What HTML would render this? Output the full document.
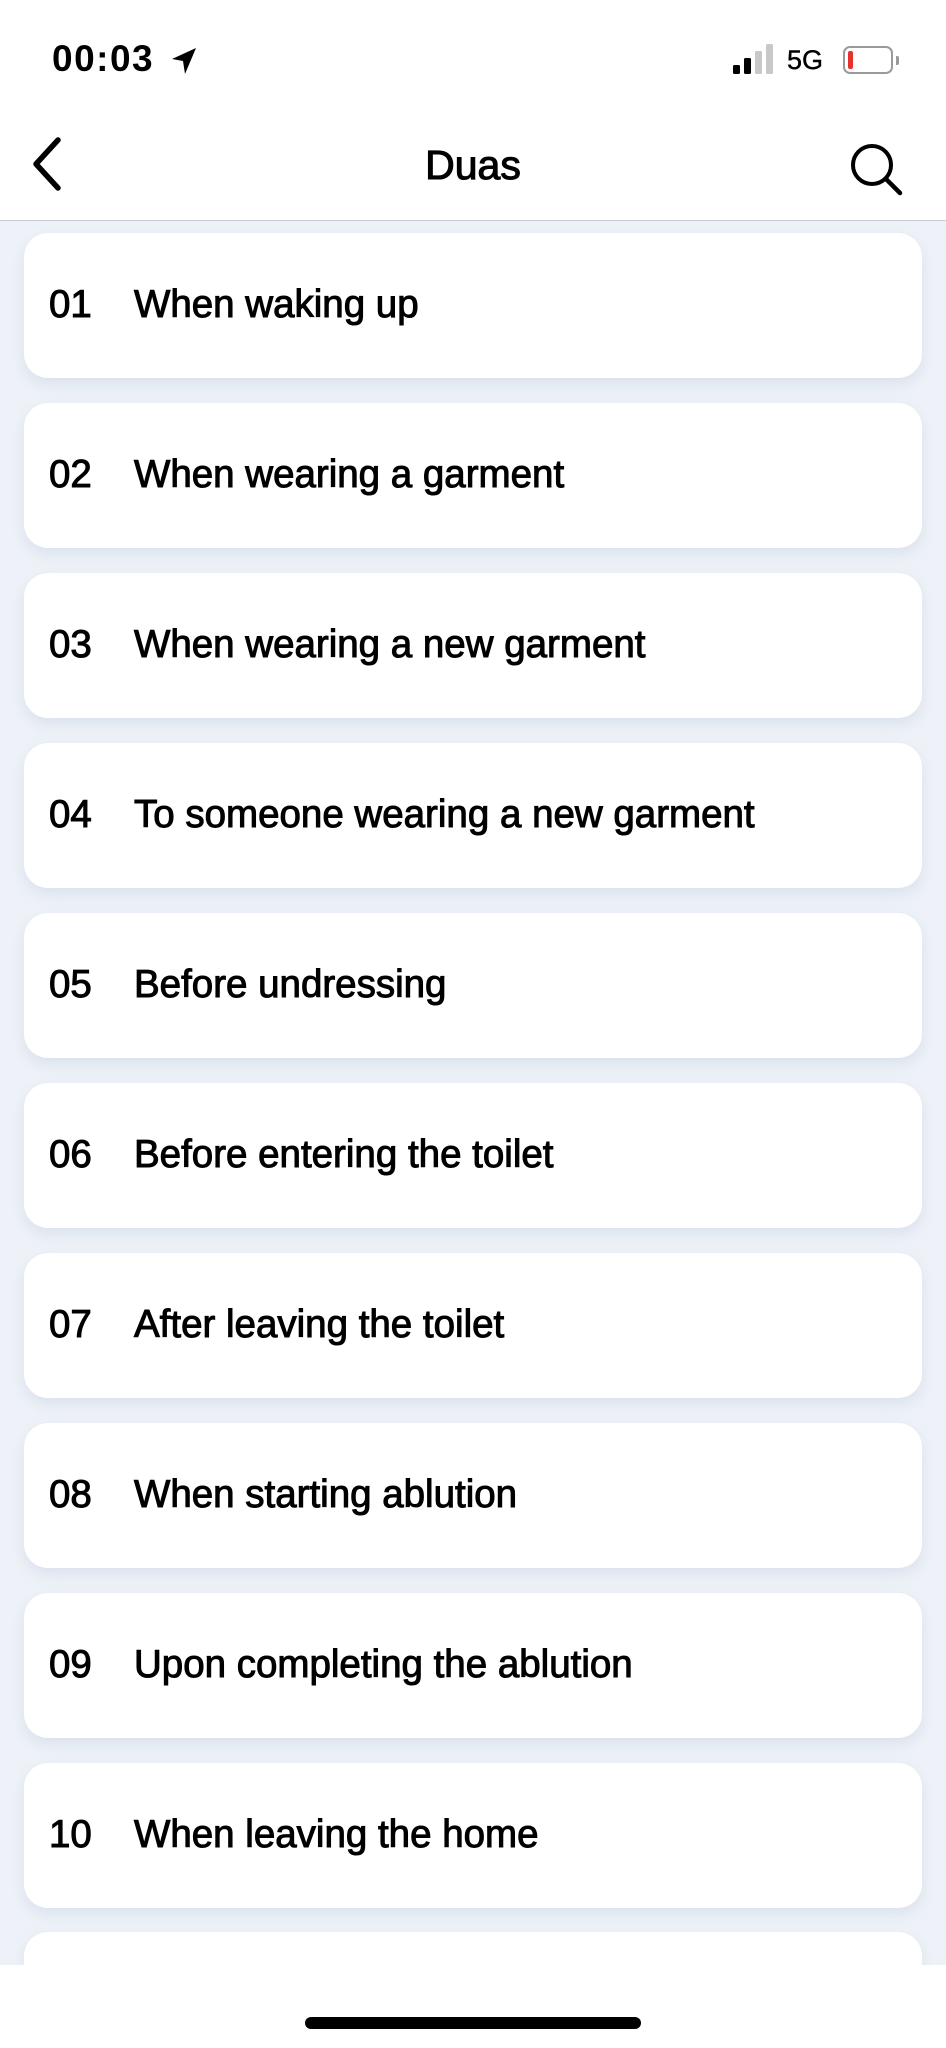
<!DOCTYPE html>
<html><head><meta charset="utf-8"><style>
*{margin:0;padding:0;box-sizing:border-box}
html,body{width:946px;height:2048px;overflow:hidden}
body{background:#eef2f8;font-family:"Liberation Sans",sans-serif;color:#000;position:relative}
.status{position:absolute;top:0;left:0;width:946px;height:221px;background:#fff;border-bottom:1.5px solid #c9ccd2;z-index:3}
.time{position:absolute;left:52px;top:38px;font-size:37px;font-weight:bold;letter-spacing:1.5px}
.title{position:absolute;left:0;width:946px;text-align:center;top:142px;font-size:41px;-webkit-text-stroke:1.1px #000}
.card{position:absolute;left:24px;width:898px;height:145px;background:#fff;border-radius:24px;box-shadow:0 6px 14px rgba(180,195,215,.35)}
.card span{position:absolute;top:50%;transform:translateY(-52%);font-size:38.5px;-webkit-text-stroke:1px #000;letter-spacing:0px}
.card .n{left:25px}.card .t{left:110px}
.bottom{position:absolute;left:0;top:1965px;width:946px;height:83px;background:#fff;z-index:5}
.home{position:absolute;left:305px;top:2017px;width:336px;height:12px;border-radius:6px;background:#000;z-index:6}
</style></head><body>
<div class="status">
<div class="time">00:03</div>
<svg style="position:absolute;left:170px;top:46px" width="28" height="30" viewBox="0 0 28 30"><path d="M26 2 L2 13 L13 15 L15 28 Z" fill="#000"/></svg>
<div style="position:absolute;left:733px;top:65px;width:7px;height:9px;background:#000;border-radius:1.5px"></div>
<div style="position:absolute;left:744px;top:58px;width:7px;height:16px;background:#000;border-radius:1.5px"></div>
<div style="position:absolute;left:755px;top:51px;width:7px;height:23px;background:#c8c8c8;border-radius:1.5px"></div>
<div style="position:absolute;left:766px;top:44px;width:7px;height:30px;background:#c8c8c8;border-radius:1.5px"></div>
<div style="position:absolute;left:787px;top:45px;font-size:27px;-webkit-text-stroke:.4px #000">5G</div>
<div style="position:absolute;left:843px;top:46px;width:50px;height:28px;border:2px solid #9a9a9a;border-radius:7px"><div style="position:absolute;left:3px;top:3px;width:5px;height:18px;background:#e8312a;border-radius:2px"></div></div>
<div style="position:absolute;left:896px;top:56px;width:3px;height:9px;background:#9a9a9a;border-radius:0 2px 2px 0"></div>
<svg style="position:absolute;left:28px;top:136px" width="40" height="56" viewBox="0 0 40 56"><path d="M30 4 L8 28 L30 52" fill="none" stroke="#000" stroke-width="5.5" stroke-linecap="round" stroke-linejoin="round"/></svg>
<div class="title">Duas</div>
<svg style="position:absolute;left:846px;top:140px" width="60" height="56" viewBox="0 0 60 56"><circle cx="26" cy="25" r="19" fill="none" stroke="#000" stroke-width="4"/><path d="M40 39 L54 53" stroke="#000" stroke-width="4.5" stroke-linecap="round"/></svg>
</div>
<div class="card" style="top:233px"><span class="n">01</span><span class="t">When waking up</span></div>
<div class="card" style="top:403px"><span class="n">02</span><span class="t">When wearing a garment</span></div>
<div class="card" style="top:573px"><span class="n">03</span><span class="t">When wearing a new garment</span></div>
<div class="card" style="top:743px"><span class="n">04</span><span class="t">To someone wearing a new garment</span></div>
<div class="card" style="top:913px"><span class="n">05</span><span class="t">Before undressing</span></div>
<div class="card" style="top:1083px"><span class="n">06</span><span class="t">Before entering the toilet</span></div>
<div class="card" style="top:1253px"><span class="n">07</span><span class="t">After leaving the toilet</span></div>
<div class="card" style="top:1423px"><span class="n">08</span><span class="t">When starting ablution</span></div>
<div class="card" style="top:1593px"><span class="n">09</span><span class="t">Upon completing the ablution</span></div>
<div class="card" style="top:1763px"><span class="n">10</span><span class="t">When leaving the home</span></div>
<div class="card" style="top:1932px;height:33px;border-radius:24px 24px 0 0"></div>
<div class="bottom"></div>
<div class="home"></div>
</body></html>
